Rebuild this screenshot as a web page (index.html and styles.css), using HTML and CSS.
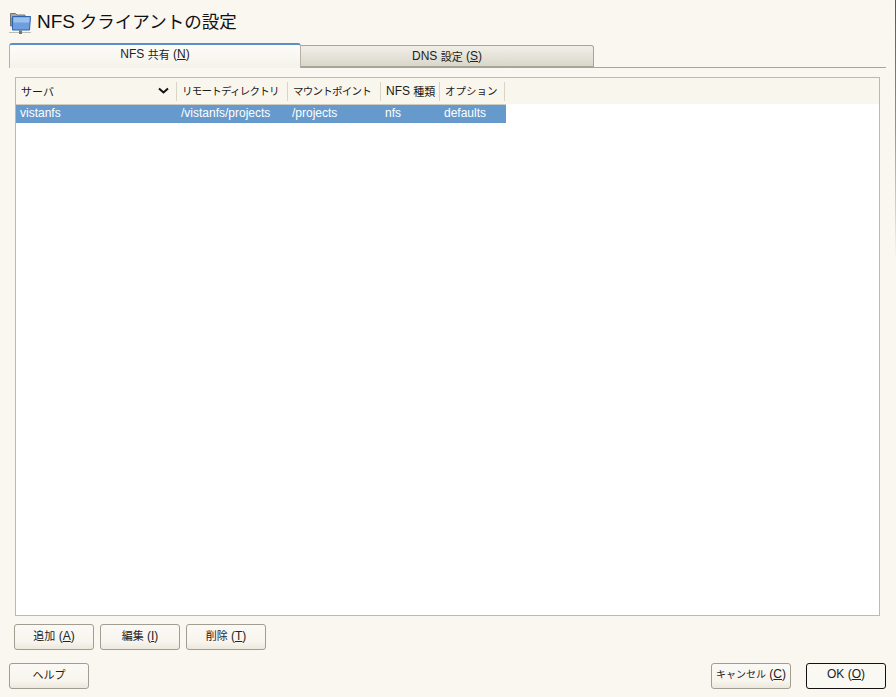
FILE: index.html
```html
<!DOCTYPE html>
<html lang="ja">
<head>
<meta charset="utf-8">
<title>NFS クライアントの設定</title>
<link rel="stylesheet" href="styles.css">
</head>
<body>
<div class="dialog">
  <header class="title">
    <svg class="title-icon" width="24" height="24" viewBox="0 0 24 24" aria-hidden="true">
      <path d="M1.500 15V2.500h5l1.500 1.500h8V7H3v8z" fill="#a9a9a4" stroke="#74746e"/>
      <path d="M3.500 5.500h18l-1 13.500h-17z" fill="#6d9ee0" stroke="#2e64ad"/>
      <path d="M4.500 6.500h16l-.3 5H4.500z" fill="#9cc0ee"/>
      <rect x="0" y="21" width="22" height="1" fill="#bdbdb6"/>
      <rect x="10" y="19.500" width="3" height="3.500" fill="#75756f"/>
    </svg>
    <h1 class="title-text"><span class="title-latin">NFS</span> クライアントの設定</h1>
  </header>
  <nav class="tabs">
    <div class="tab tab-active">NFS <span class="ja">共有</span> (<u>N</u>)</div>
    <div class="tab tab-idle">DNS <span class="ja">設定</span> (<u>S</u>)</div>
  </nav>
  <main class="panel">
    <div class="table-frame">
      <div class="grid-row head-row">
        <div class="cell col-server head-cell head-sort"><span class="ja">サーバ</span>
          <svg class="sort-icon" width="11" height="7" viewBox="0 0 11 7" aria-hidden="true"><path d="M1 1.500 5.500 5.500 10 1.500" fill="none" stroke="#111" stroke-width="2"/></svg>
        </div>
        <div class="cell col-remote head-cell"><span class="head-kana">リモートディレクトリ</span></div>
        <div class="cell col-mount head-cell"><span class="head-kana">マウントポイント</span></div>
        <div class="cell col-type head-cell">NFS&nbsp;<span class="ja">種類</span></div>
        <div class="cell col-opt head-cell"><span class="head-kana-wide">オプション</span></div>
      </div>
      <div class="grid-row data-row">
        <div class="cell col-server">vistanfs</div>
        <div class="cell col-remote">/vistanfs/projects</div>
        <div class="cell col-mount">/projects</div>
        <div class="cell col-type">nfs</div>
        <div class="cell col-opt">defaults</div>
      </div>
    </div>
    <div class="actions">
      <button class="btn"><span class="ja">追加</span> (<u>A</u>)</button>
      <button class="btn"><span class="ja">編集</span> (<u>I</u>)</button>
      <button class="btn"><span class="ja">削除</span> (<u>T</u>)</button>
    </div>
  </main>
  <footer class="footer">
    <button class="btn"><span class="ja">ヘルプ</span></button>
    <div class="footer-right">
      <button class="btn"><span class="kana">キャンセル</span> (<u>C</u>)</button>
      <button class="btn btn-default">OK (<u>O</u>)</button>
    </div>
  </footer>
</div>
</body>
</html>
```
FILE: styles.css
```css
* { box-sizing: border-box; }
html, body { margin: 0; height: 100%; }
body {
  background: #faf7f1;
  color: #222;
  font-family: "Liberation Sans", "Noto Sans CJK JP", sans-serif;
  font-size: 12px;
  overflow: hidden;
  position: relative;
}
/* edge of the neighbouring window, visible along the right side */
body::after {
  content: "";
  position: absolute;
  top: 0;
  right: 0;
  width: 1.500px;
  height: 260px;
  background: linear-gradient(#3f5a78, #8a97a2 50%, #faf7f1);
}
.ja { font-size: 11px; }
.kana { font-size: 10px; }
.head-kana { font-size: 10.500px; letter-spacing: -0.750px; }
.head-kana-wide { font-size: 10.500px; }
.dialog {
  width: 896px;
  height: 697px;
  padding: 0 10px 8px 9px;
  display: flex;
  flex-direction: column;
}
.title {
  height: 43px;
  display: flex;
  align-items: center;
  gap: 4px;
  padding-top: 1px;
}
.title-icon { flex: none; margin-top: 2px; }
.title-text {
  margin: 0;
  font-size: 17.500px;
  font-weight: 400;
  color: #111;
  line-height: 24px;
}
.title-latin { font-size: 19px; }
.tabs {
  height: 25px;
  display: flex;
  align-items: flex-end;
  border-bottom: 1px solid #a8a498;
  width: 877px;
}
.tab {
  display: flex;
  align-items: center;
  justify-content: center;
  white-space: pre;
}
.tab-active {
  width: 292px;
  height: 25px;
  margin-bottom: -1px;
  padding-bottom: 6px;
  background: linear-gradient(#fdfcf9, #f5f2ea);
  border: 1px solid #b5b1a5;
  border-top: 2px solid #5b8fc9;
  border-bottom: 0;
  border-radius: 3px 3px 0 0;
}
.tab-idle {
  width: 293px;
  height: 22px;
  background: linear-gradient(#f2efe7, #d9d6cb);
  border: 1px solid #a8a498;
  border-left: 0;
  border-radius: 0 3px 0 0;
}
.panel {
  flex: 1;
  display: flex;
  flex-direction: column;
  padding: 9px 6px 0 6px;
}
.table-frame {
  height: 539px;
  width: 865px;
  background: #fff;
  border: 1px solid #bdb9ad;
}
.grid-row { display: flex; }
.head-row {
  height: 26px;
  background: #f9f6ee;
}
.cell {
  display: flex;
  align-items: center;
  padding-left: 5px;
  flex: none;
  white-space: nowrap;
  overflow: hidden;
}
.head-cell {
  margin: 4px 0 3px;
  padding-bottom: 2px;
  border-right: 1px solid #d8d4c8;
  color: #1a1a1a;
}
.head-sort { justify-content: space-between; padding-right: 7px; }
.sort-icon { flex: none; }
.col-server { width: 161px; }
.col-remote { width: 111px; }
.col-mount { width: 93px; }
.col-type { width: 59px; }
.col-opt { width: 65px; }
.data-row {
  width: 490px;
  height: 19px;
  background: #6699cc;
  color: #fff;
  border-top: 1px solid #cfcbbf;
}
.data-row .cell { padding-left: 4px; padding-bottom: 2px; }
.actions {
  display: flex;
  gap: 6px;
  margin: 8px 0 0 -1px;
}
.btn {
  width: 80px;
  height: 26px;
  padding: 0 0 5px;
  background: linear-gradient(#fbf9f5 0%, #f8f5ee 70%, #ece8dd 100%);
  border: 1px solid #a19d91;
  border-radius: 3px;
  font: inherit;
  color: #222;
  white-space: pre;
}
.footer {
  margin-top: auto;
  display: flex;
  justify-content: space-between;
}
.footer-right { display: flex; gap: 15px; }
.btn-default {
  background: #faf8f2;
  border-color: #111;
}
```
